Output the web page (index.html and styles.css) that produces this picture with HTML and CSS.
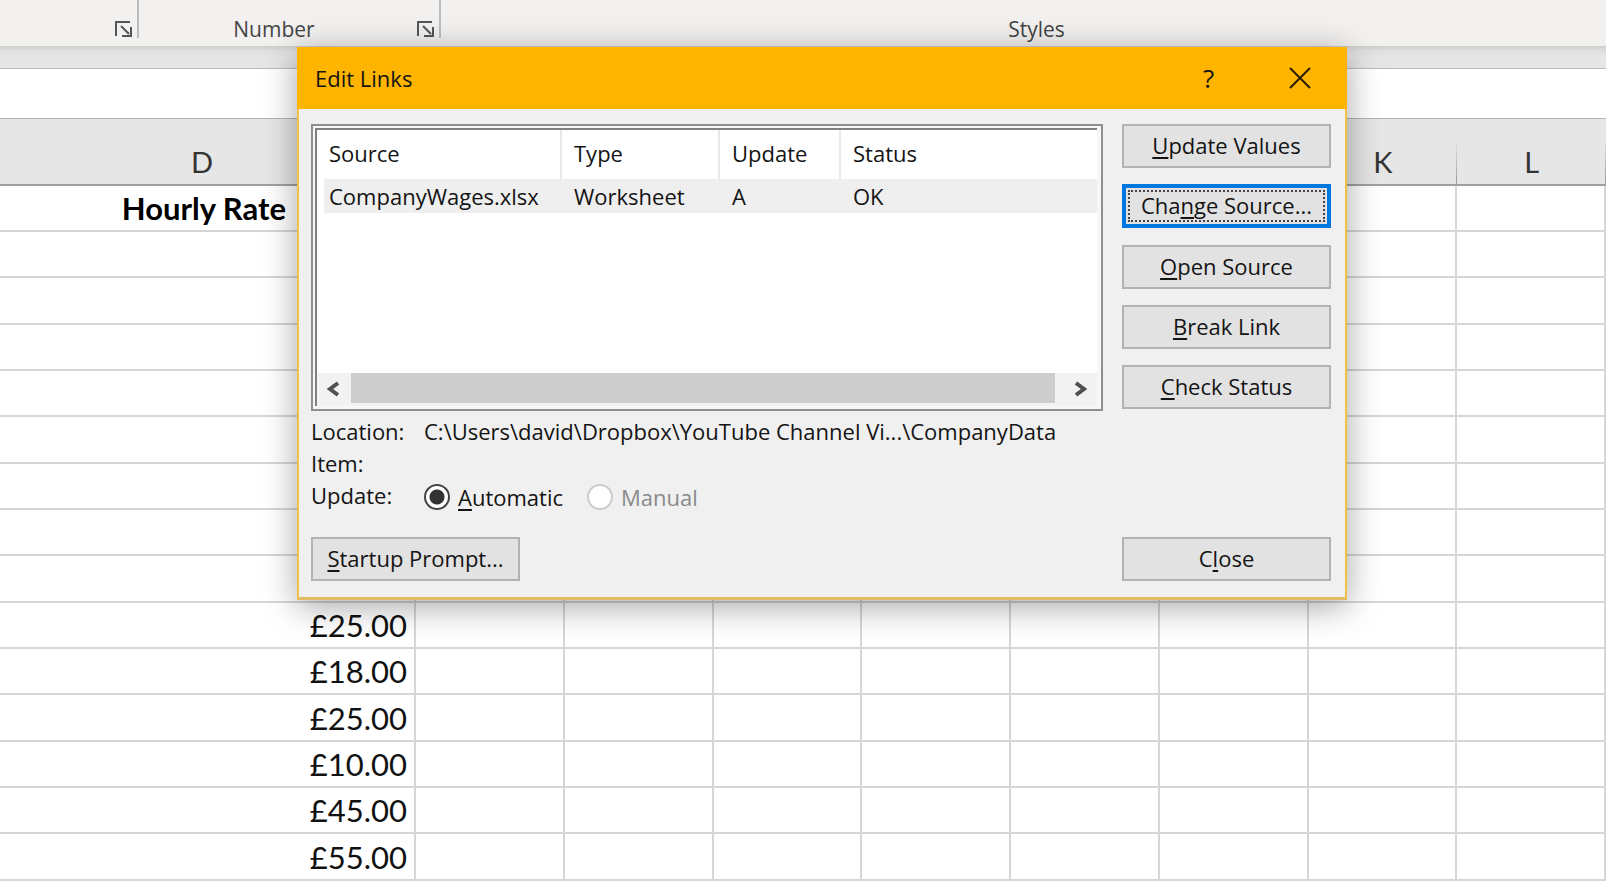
FILE: index.html
```html
<!DOCTYPE html>
<html lang="en">
<head>
<meta charset="utf-8">
<title>Edit Links</title>
<link rel="stylesheet" href="styles.css">
</head>
<body>
<main class="app">
  <header class="ribbon">
    <div class="group">
      <span class="caption"></span>
      <button class="launcher" type="button" aria-label="Alignment settings">
        <svg viewBox="0 0 18 18" width="18" height="18"><path d="M1 16V2H15M6 6L14 14M16 7V16H7" /></svg>
      </button>
    </div>
    <div class="group">
      <span class="caption">Number</span>
      <button class="launcher" type="button" aria-label="Number format settings">
        <svg viewBox="0 0 18 18" width="18" height="18"><path d="M1 16V2H15M6 6L14 14M16 7V16H7" /></svg>
      </button>
    </div>
    <div class="group group-wide">
      <span class="caption">Styles</span>
    </div>
  </header>
  <div class="ribbon-edge"></div>
  <input class="formula" type="text" aria-label="Formula bar">
  <table class="sheet">
    <thead>
      <tr><th class="rate">D</th><th></th><th></th><th></th><th></th><th></th><th></th><th>K</th><th>L</th></tr>
    </thead>
    <tbody>
      <tr><td class="title">Hourly Rate</td><td></td><td></td><td></td><td></td><td></td><td></td><td></td><td></td></tr>
      <tr><td></td><td></td><td></td><td></td><td></td><td></td><td></td><td></td><td></td></tr>
      <tr><td></td><td></td><td></td><td></td><td></td><td></td><td></td><td></td><td></td></tr>
      <tr><td></td><td></td><td></td><td></td><td></td><td></td><td></td><td></td><td></td></tr>
      <tr><td></td><td></td><td></td><td></td><td></td><td></td><td></td><td></td><td></td></tr>
      <tr><td></td><td></td><td></td><td></td><td></td><td></td><td></td><td></td><td></td></tr>
      <tr><td></td><td></td><td></td><td></td><td></td><td></td><td></td><td></td><td></td></tr>
      <tr><td></td><td></td><td></td><td></td><td></td><td></td><td></td><td></td><td></td></tr>
      <tr><td></td><td></td><td></td><td></td><td></td><td></td><td></td><td></td><td></td></tr>
      <tr><td>£25.00</td><td></td><td></td><td></td><td></td><td></td><td></td><td></td><td></td></tr>
      <tr><td>£18.00</td><td></td><td></td><td></td><td></td><td></td><td></td><td></td><td></td></tr>
      <tr><td>£25.00</td><td></td><td></td><td></td><td></td><td></td><td></td><td></td><td></td></tr>
      <tr><td>£10.00</td><td></td><td></td><td></td><td></td><td></td><td></td><td></td><td></td></tr>
      <tr><td>£45.00</td><td></td><td></td><td></td><td></td><td></td><td></td><td></td><td></td></tr>
      <tr><td>£55.00</td><td></td><td></td><td></td><td></td><td></td><td></td><td></td><td></td></tr>
    </tbody>
  </table>

  <section class="dialog" role="dialog" aria-labelledby="dialog-title">
    <div class="titlebar">
      <h1 id="dialog-title">Edit Links</h1>
      <button class="title-button" type="button">?</button>
      <button class="title-button" type="button" aria-label="Close dialog">
        <svg viewBox="0 0 22 22" width="22" height="22"><path d="M1 1L21 21M21 1L1 21" /></svg>
      </button>
    </div>
    <div class="content">
      <div class="upper">
        <div class="list">
          <div class="list-inner">
            <table class="links">
              <colgroup><col class="c-source"><col class="c-type"><col class="c-update"><col></colgroup>
              <thead><tr><th>Source</th><th>Type</th><th>Update</th><th>Status</th></tr></thead>
              <tbody><tr><td>CompanyWages.xlsx</td><td>Worksheet</td><td>A</td><td>OK</td></tr></tbody>
            </table>
            <div class="scrollbar">
              <button type="button" aria-label="Scroll left"><svg viewBox="0 0 14 16" width="14" height="16"><path d="M12 2L4 8L12 14" /></svg></button>
              <div class="thumb"></div>
              <button type="button" aria-label="Scroll right"><svg viewBox="0 0 14 16" width="14" height="16"><path d="M2 2L10 8L2 14" /></svg></button>
            </div>
          </div>
        </div>
        <div class="actions">
          <button class="btn" type="button"><span><u>U</u>pdate Values</span></button>
          <button class="btn btn-focus" type="button"><span>Cha<u>n</u>ge Source...</span></button>
          <button class="btn" type="button"><span><u>O</u>pen Source</span></button>
          <button class="btn" type="button"><span><u>B</u>reak Link</span></button>
          <button class="btn" type="button"><span><u>C</u>heck Status</span></button>
        </div>
      </div>
      <div class="details">
        <span>Location:</span><span>C:\Users\david\Dropbox\YouTube Channel Vi...\CompanyData</span>
        <span>Item:</span><span></span>
        <span>Update:</span>
        <div class="radios">
          <input type="radio" name="update" id="auto" checked><label for="auto"><u>A</u>utomatic</label>
          <input type="radio" name="update" id="manual" disabled><label for="manual">Manual</label>
        </div>
      </div>
      <div class="footer">
        <button class="btn" type="button"><span><u>S</u>tartup Prompt...</span></button>
        <button class="btn" type="button"><span>C<u>l</u>ose</span></button>
      </div>
    </div>
  </section>
</main>
</body>
</html>
```
FILE: styles.css
```css
* { box-sizing: border-box; }

body {
  margin: 0;
  background: #fff;
  color: #141414;
  font-family: "Open Sans", "Noto Sans", sans-serif;
  font-size: 22px;
}

button, input { font: inherit; color: inherit; }

u {
  text-decoration-thickness: 2px;
  text-underline-offset: 3px;
  text-decoration-skip-ink: none;
}

.app {
  position: relative;
  height: 100vh;
  overflow: hidden;
}

/* Ribbon */
.ribbon {
  display: grid;
  grid-template-columns: 139px 302px 1fr;
  height: 46px;
  padding-bottom: 8px;
  background: #f2f1f0;
}

.group {
  display: flex;
  align-items: flex-end;
  border-right: 2px solid #bdbdbd;
}

.group-wide { padding-left: 26px; border-right: 0; }

.caption {
  flex: 1;
  color: #444;
  font-size: 21px;
  line-height: 18px;
  text-align: center;
}

.launcher {
  display: flex;
  padding: 0 4px 0 8px;
  border: 0;
  background: none;
}

.launcher path { fill: none; stroke: #555; stroke-width: 2; }

.ribbon-edge {
  height: 23px;
  border-bottom: 1px solid #bcbcbc;
  background: linear-gradient(#cdcdcb, #dedede 20%, #e6e6e6 50%);
}

.formula {
  display: block;
  width: 100%;
  height: 49px;
  padding: 0 12px;
  border: 0;
  background: #fff;
}

/* Worksheet */
.sheet {
  width: 100%;
  border-spacing: 0;
  table-layout: fixed;
  font-family: Lato, "Open Sans", sans-serif;
  font-size: 31px;
  line-height: 40px;
}

.sheet th {
  height: 68px;
  padding: 20px 0 0;
  border-top: 1px solid #b4b4b4;
  border-bottom: 2px solid #a0a0a0;
  background: linear-gradient(transparent 20px, #999) right / 1px 100% no-repeat #e6e6e6;
  color: #333;
  font-size: 29px;
  font-weight: 400;
}

.sheet th.rate { width: 416px; padding-right: 12px; }

.sheet td {
  height: 46px;
  padding: 0 7px 0 0;
  border-right: 2px solid #d6d6d6;
  border-bottom: 2px solid #d6d6d6;
  color: #111;
  text-align: right;
}

.sheet tr:nth-child(3n) td { height: 47px; }

.sheet td.title {
  padding-right: 128px;
  color: #000;
  font-weight: 700;
}

/* Dialog window */
.dialog {
  position: absolute;
  top: 47px;
  left: 297px;
  width: 1050px;
  border: 2px solid #f2c14a;
  border-top: 0;
  border-bottom: 3px solid #e0bc66;
  background: #f0f0f0;
  box-shadow: 0 6px 32px rgba(0, 0, 0, 0.36);
}

.titlebar {
  display: flex;
  align-items: center;
  height: 62px;
  margin: 0 -2px;
  padding: 0 2px 0 18px;
  background: #ffb400;
}

.titlebar h1 {
  flex: 1;
  margin: 0;
  font-size: 22px;
  font-weight: 400;
}

.title-button {
  display: flex;
  align-items: center;
  justify-content: center;
  width: 91px;
  height: 60px;
  padding: 0;
  border: 0;
  background: none;
  font-size: 26px;
}

.title-button path { stroke: #2a1d00; stroke-width: 2; }

.content { padding: 15px 14px 16px 12px; }

.upper { display: flex; gap: 19px; }

.list {
  flex: 1;
  height: 287px;
  padding: 2px 4px 3px 2px;
  border: 2px solid #8f8f8f;
  background: #f7f7f7;
}

.list-inner {
  display: flex;
  flex-direction: column;
  justify-content: space-between;
  height: 100%;
  border-top: 2px solid #808080;
  border-left: 2px solid #808080;
  background: #fff;
}

.links {
  width: 100%;
  padding-left: 7px;
  border-spacing: 0;
  table-layout: fixed;
  line-height: 34px;
}

.c-source { width: 238px; }
.c-type { width: 158px; }
.c-update { width: 121px; }

.links th {
  height: 49px;
  padding: 0 0 3px 5px;
  border-right: 2px solid #e8e8e8;
  font-weight: 400;
  text-align: left;
}

.links th:last-child { border-right: 0; }
.links th + th, .links td + td { padding-left: 12px; }
.links td { height: 34px; padding: 0 0 0 5px; background: #efefef; }

.scrollbar {
  display: flex;
  height: 33px;
  background: #f2f2f2;
}

.scrollbar button {
  display: flex;
  align-items: center;
  justify-content: center;
  width: 34px;
  padding: 0 2px 2px 0;
  border: 0;
  background: none;
}

.scrollbar button:last-child { width: 42px; padding: 0 0 2px 10px; }
.scrollbar path { fill: none; stroke: #505050; stroke-width: 4; }
.thumb { flex: 1; height: 30px; background: #cdcdcd; }

.actions {
  display: flex;
  flex-direction: column;
  justify-content: space-between;
  padding-bottom: 2px;
}

.btn {
  width: 209px;
  height: 44px;
  padding: 0 0 2px;
  border: 2px solid #b3b3b3;
  background: #e2e2e2;
  white-space: nowrap;
}

.btn-focus { padding: 2px; border: 4px solid #0078e0; }

.btn-focus span {
  display: flex;
  align-items: center;
  justify-content: center;
  height: 100%;
  padding-bottom: 2px;
  border: 2px dotted #444;
  white-space: pre;
}

.details {
  display: grid;
  grid-template-columns: 113px 1fr;
  padding-top: 4px;
  line-height: 32px;
}

.details > span { min-height: 32px; }

.radios { display: flex; align-items: center; padding-top: 2px; }

.radios input {
  appearance: none;
  width: 26px;
  height: 26px;
  margin: 0 8px 0 0;
  border: 2px solid #444;
  border-radius: 50%;
  background: radial-gradient(circle, #333 7px, #fff 8px);
}

.radios label { margin-right: 24px; }
.radios input:disabled { border-color: #ccc; background: #fff; }
.radios input:disabled + label { color: #8a8a8a; }

.footer {
  display: flex;
  justify-content: space-between;
  padding-top: 24px;
}
```
